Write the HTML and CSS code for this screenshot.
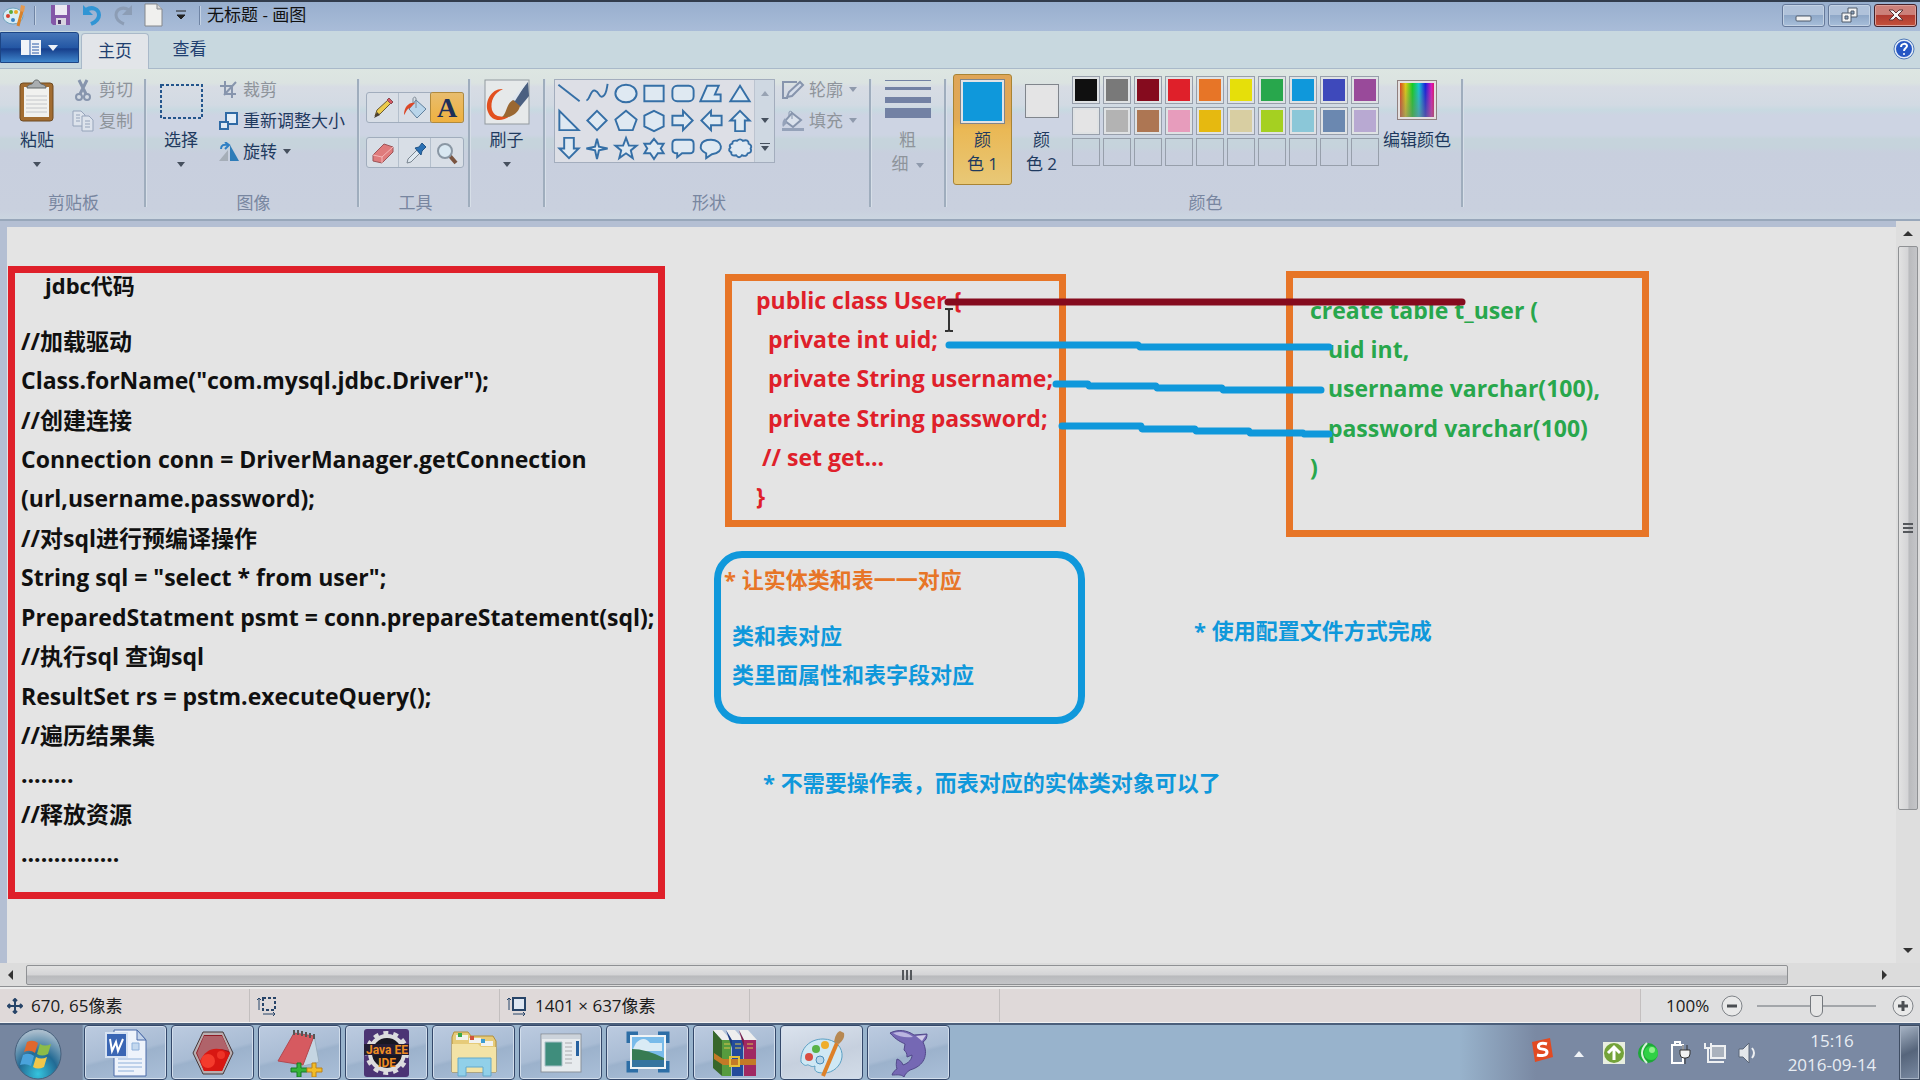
FILE: index.html
```html
<!DOCTYPE html>
<html lang="zh-CN">
<head>
<meta charset="utf-8">
<title>无标题 - 画图</title>
<link rel="stylesheet" href="styles.css">
</head>
<body>
<header class="titlebar">
  <svg class="app-icon" width="24" height="24" viewBox="0 0 24 24"><ellipse cx="11" cy="13" rx="10" ry="8" fill="#d9ecf4" stroke="#6fa3bd"/><circle cx="6" cy="13" r="2" fill="#d8412f"/><circle cx="9" cy="9" r="2" fill="#5cab3c"/><circle cx="14" cy="9" r="2" fill="#e9a927"/><circle cx="11" cy="17" r="2" fill="#3a83c4"/><path d="M20 8L16 23" stroke="#d9812a" stroke-width="3"/><path d="M18 8l1-6 4 1-1 6z" fill="#e59a51"/></svg>
  <span class="bar-sep"></span>
  <button class="quick" aria-label="保存"><svg width="22" height="22" viewBox="0 0 22 22"><path d="M1 1h19v20H3l-2-2z" fill="#8457a8"/><path d="M5 1h12v10H5z" fill="#ece9f3"/><path d="M6 14h10v7H6z" fill="#d8d4e0"/><path d="M8 16h3v4H8z" fill="#493163"/></svg></button>
  <button class="quick" aria-label="撤消"><svg width="22" height="22" viewBox="0 0 22 22"><path d="M5 6c6-4 13-1 13 5 0 4-3 7-8 9" fill="none" stroke="#3195d4" stroke-width="4"/><path d="M2 1v10h10z" fill="#3195d4"/></svg></button>
  <button class="quick" aria-label="重做"><svg width="22" height="22" viewBox="0 0 22 22"><path d="M17 6C11 2 4 5 4 11c0 4 3 7 8 9" fill="none" stroke="#8c9db5" stroke-width="3"/><path d="M20 1v10H10z" fill="#8c9db5"/></svg></button>
  <button class="quick" aria-label="新建"><svg width="22" height="24" viewBox="0 0 22 24"><path d="M2 1h12l5 5v17H2z" fill="#f0f0ee" stroke="#85888c"/><path d="M14 1v5h5" fill="#d4d4d4" stroke="#85888c"/></svg></button>
  <button class="quick quick-more" aria-label="自定义快速访问工具栏"><svg width="12" height="12" viewBox="0 0 12 12"><path d="M1 2h10M2 6h8l-4 4z" fill="#222" stroke="#222" stroke-width="1"/></svg></button>
  <span class="bar-sep"></span>
  <h1 class="title">无标题 - 画图</h1>
  <div class="window-buttons">
    <button class="win" aria-label="最小化"><svg width="20" height="18" viewBox="0 0 20 18"><rect x="2" y="10" width="15" height="5" rx="1" fill="#f2f2f2" stroke="#4e5a6b"/></svg></button>
    <button class="win" aria-label="还原"><svg width="20" height="18" viewBox="0 0 20 18"><path d="M8 2h9v9H8z" fill="#f2f2f2" stroke="#4e5a6b"/><path d="M11 5h3v3h-3z" fill="#8ba2be" stroke="#4e5a6b"/><path d="M2 7h9v9H2z" fill="#f2f2f2" stroke="#4e5a6b"/><path d="M5 10h3v3H5z" fill="#8ba2be" stroke="#4e5a6b"/></svg></button>
    <button class="win win-close" aria-label="关闭"><svg width="20" height="18" viewBox="0 0 20 18"><path d="M3 4h4l3 3 3-3h4l-5 5 5 5h-4l-3-3-3 3H3l5-5z" fill="#f4f4f4" stroke="#5c3435"/></svg></button>
  </div>
</header>

<nav class="tabs">
  <button class="file-button" aria-label="画图菜单"><svg width="40" height="20" viewBox="0 0 40 20"><rect x="1" y="2" width="20" height="15" fill="#f0f3f8"/><path d="M10 2v15" stroke="#2a5ba8"/><path d="M12 6h7M12 9h7M12 12h7M12 15h7" stroke="#2a5ba8" stroke-width="1"/><path d="M28 7h10l-5 6z" fill="#eef2f8"/></svg></button>
  <button class="tab tab-active">主页</button>
  <button class="tab">查看</button>
  <button class="help" aria-label="帮助"><svg width="22" height="22" viewBox="0 0 22 22"><circle cx="11" cy="11" r="9" fill="#2657c4" stroke="#e4ecf8" stroke-width="2"/><circle cx="11" cy="11" r="10" fill="none" stroke="#4e78b8"/><path d="M8 9c0-4 6-4 6-1 0 2-3 2-3 5" fill="none" stroke="#fff" stroke-width="2"/><circle cx="11" cy="16" r="1" fill="#fff"/></svg></button>
</nav>

<main class="ribbon">
  <section class="group group-clip">
    <div class="group-body">
      <button class="big big-paste"><span class="big-icon"><svg width="36" height="44" viewBox="0 0 36 44"><rect x="1" y="4" width="33" height="38" rx="3" fill="#a26c31" stroke="#6f4a22"/><path d="M5 8h25v30H5z" fill="#f1f1ef"/><path d="M7 17h21M7 21h21M7 25h21M7 29h21M7 33h21" stroke="#c4c6ca"/><path d="M8 9c0-4 5-3 6-5 1-4 6-4 7 0 1 2 6 1 6 5z" fill="#a9adb0" stroke="#5f6467"/></svg></span><span>粘贴</span><i class="caret"></i></button>
      <div class="stack">
        <button class="small" disabled><svg width="24" height="24" viewBox="0 0 24 24"><path d="M8 2l7 14M16 2L9 16" stroke="#8795ad" stroke-width="3"/><circle cx="8" cy="19" r="3" fill="none" stroke="#8795ad" stroke-width="2"/><circle cx="16" cy="19" r="3" fill="none" stroke="#8795ad" stroke-width="2"/></svg>剪切</button>
        <button class="small" disabled><svg width="24" height="24" viewBox="0 0 24 24"><path d="M2 2h8l4 4v11H2z" fill="#dde3ec" stroke="#95a3ba"/><path d="M11 7h7l4 4v11H11z" fill="#dde3ec" stroke="#95a3ba"/><path d="M5 6h4M5 9h4M5 12h4M14 12h5M14 15h5M14 18h5" stroke="#95a3ba"/></svg>复制</button>
      </div>
    </div>
    <h2 class="group-label">剪贴板</h2>
  </section>

  <section class="group group-image">
    <div class="group-body">
      <button class="big big-select"><span class="big-icon"><svg width="44" height="44" viewBox="0 0 44 44"><rect x="2" y="6" width="41" height="33" fill="none" stroke="#23558c" stroke-width="2" stroke-dasharray="3 2"/></svg></span><span>选择</span><i class="caret"></i></button>
      <div class="stack">
        <button class="small" disabled><svg width="20" height="20" viewBox="0 0 20 20"><path d="M6 1v13h11M1 6h12v12M5 15L17 2" fill="none" stroke="#8795ad" stroke-width="2"/></svg>裁剪</button>
        <button class="small"><svg width="20" height="20" viewBox="0 0 20 20"><path d="M7 2h11v11H7z" fill="#e4eef8" stroke="#2f6aa5" stroke-width="2"/><path d="M1 11h8v7H1z" fill="#dfe9f4" stroke="#2f6aa5" stroke-width="2"/></svg>重新调整大小</button>
        <button class="small"><svg width="20" height="20" viewBox="0 0 20 20"><path d="M9 8v11H0z" fill="#a6aeb8"/><path d="M11 3v16h9z" fill="#2e7cb8"/><path d="M2 7c0-4 3-5 7-4M6 0l4 3-4 4" fill="none" stroke="#2f7fc4" stroke-width="2"/></svg>旋转<i class="caret"></i></button>
      </div>
    </div>
    <h2 class="group-label">图像</h2>
  </section>

  <section class="group group-tools">
    <div class="group-body tool-rows">
      <div class="tool-row">
        <button class="tool" aria-label="铅笔"><svg width="26" height="26" viewBox="0 0 26 26"><path d="M5 21l2-6L18 5l3 3L10 19z" fill="#eccb4c" stroke="#6a5933"/><path d="M17 5l2-2 4 4-2 2z" fill="#d65b66" stroke="#8b4950"/><path d="M4 23l3-6 3 3z" fill="#4a3f33"/></svg></button>
        <button class="tool" aria-label="用颜色填充"><svg width="26" height="26" viewBox="0 0 26 26"><path d="M14 5l10 9-9 9-8-9z" fill="#b9d5ea" stroke="#5f7f9c"/><path d="M14 13V4c0-3-3-2-3 0v5" fill="none" stroke="#7d8a96"/><path d="M13 8C7 7 2 12 2 20c2-2 2-6 6-7z" fill="#db4727"/></svg></button>
        <button class="tool tool-active" aria-label="文本">A</button>
      </div>
      <div class="tool-row">
        <button class="tool" aria-label="橡皮擦"><svg width="26" height="26" viewBox="0 0 26 26"><path d="M3 15L14 4l9 3v5L12 23l-9-2z" fill="#df7b7c" stroke="#9b5558"/><path d="M3 15l9 2 11-10M12 17v6" fill="none" stroke="#f3b8b8"/></svg></button>
        <button class="tool" aria-label="颜色选取器"><svg width="26" height="26" viewBox="0 0 26 26"><path d="M5 23l1-4 9-9 3 3-9 9z" fill="#dfe8f0" stroke="#7a8590"/><path d="M13 8l4-1 3-4 4 4-4 4-1 4z" fill="#2a70b4" stroke="#245586"/></svg></button>
        <button class="tool" aria-label="放大镜"><svg width="26" height="26" viewBox="0 0 26 26"><path d="M16 16l6 7" stroke="#7a5440" stroke-width="4"/><circle cx="11" cy="11" r="7" fill="#d9e8f2" stroke="#8a97a4" stroke-width="2"/></svg></button>
      </div>
    </div>
    <h2 class="group-label">工具</h2>
  </section>

  <section class="group group-brush">
    <div class="group-body">
      <button class="big"><span class="big-icon"><svg width="46" height="46" viewBox="0 0 46 46"><rect x="1" y="1" width="44" height="44" fill="#e6e9ea" stroke="#92999f"/><path d="M19 10C8 9 0 22 4 33c4 10 14 10 22 4-8 1-15 2-18-6-2-9 2-17 11-21z" fill="#e2501f"/><path d="M44 3L29 22l7 6 9-11z" fill="#4a5f80"/><path d="M43 3L28 20l3 2z" fill="#dfe6ee"/><path d="M29 21l7 6c-2 8-9 12-18 11 5-4 4-13 11-17z" fill="#9a6832"/></svg></span><span>刷子</span><i class="caret"></i></button>
    </div>
  </section>

  <section class="group group-shapes">
    <div class="group-body">
      <div class="shape-box">
        <div class="shape-grid">
          <svg viewBox="0 0 28 28"><path d="M3 5l22 17"/></svg>
          <svg viewBox="0 0 28 28"><path d="M3 21c4 0 4-12 9-10s4 8 8 6 4-8 5-13"/></svg>
          <svg viewBox="0 0 28 28"><ellipse cx="14" cy="14" rx="11" ry="9"/></svg>
          <svg viewBox="0 0 28 28"><path d="M4 6h20v16H4z"/></svg>
          <svg viewBox="0 0 28 28"><rect x="3" y="6" width="22" height="16" rx="5"/></svg>
          <svg viewBox="0 0 28 28"><path d="M3 22L10 6h12l-4 9h6v7z"/></svg>
          <svg viewBox="0 0 28 28"><path d="M14 6l10 16H4z"/></svg>
          <svg viewBox="0 0 28 28"><path d="M4 4v20h20z"/></svg>
          <svg viewBox="0 0 28 28"><path d="M14 4l10 10-10 10L4 14z"/></svg>
          <svg viewBox="0 0 28 28"><path d="M14 4l11 9-4 11H7L3 13z"/></svg>
          <svg viewBox="0 0 28 28"><path d="M14 4l10 5v11l-10 5-10-5V9z"/></svg>
          <svg viewBox="0 0 28 28"><path d="M3 9h11V4l10 10-10 10v-5H3z"/></svg>
          <svg viewBox="0 0 28 28"><path d="M25 9H14V4L4 14l10 10v-5h11z"/></svg>
          <svg viewBox="0 0 28 28"><path d="M9 25V14H4L14 4l10 10h-5v11z"/></svg>
          <svg viewBox="0 0 28 28"><path d="M9 3v11H4l10 10 10-10h-5V3z"/></svg>
          <svg viewBox="0 0 28 28"><path d="M14 4l2 8 9 2-9 2-2 9-2-9-9-2 9-2z"/></svg>
          <svg viewBox="0 0 28 28"><path d="M14 3l3 8h8l-6 5 2 8-7-5-7 5 2-8-6-5h8z"/></svg>
          <svg viewBox="0 0 28 28"><path d="M14 4l4 5h6l-3 5 3 5h-6l-4 6-4-6H4l3-5-3-5h6z"/></svg>
          <svg viewBox="0 0 28 28"><path d="M7 5h14q4 0 4 4v6q0 4-4 4h-8l-5 4v-4q-5 0-5-4V9q0-4 4-4z"/></svg>
          <svg viewBox="0 0 28 28"><path d="M9 19C0 15 2 5 14 5s15 13 1 15l-6 4z"/></svg>
          <svg viewBox="0 0 28 28"><path d="M6 9q0-4 5-3 3-3 6 0 6-2 6 3 4 2 2 5 2 4-3 5-1 4-6 2-3 4-6 0-6 1-5-3-4-2-1-5-2-3 2-4z"/></svg>
        </div>
        <div class="shape-scroll"><i class="caret caret-up"></i><i class="caret"></i><i class="caret caret-bar"></i></div>
      </div>
      <div class="stack">
        <button class="small" disabled><svg width="24" height="22" viewBox="0 0 24 22"><path d="M16 3H2v16h5" fill="none" stroke="#8795ad" stroke-width="2"/><path d="M6 18l2-5L19 3l3 3-11 11z" fill="#d6deea" stroke="#8795ad" stroke-width="2"/></svg>轮廓<i class="caret"></i></button>
        <button class="small" disabled><svg width="24" height="22" viewBox="0 0 24 22"><path d="M11 3l9 7-8 7-8-6z" fill="#dbe2ec" stroke="#8795ad" stroke-width="2"/><path d="M11 9V2q-3-2-3 1v3" fill="none" stroke="#8795ad"/><path d="M4 8q-4 4-2 9l4-4zM1 18h22v3H1z" fill="#95a2b9"/></svg>填充<i class="caret"></i></button>
      </div>
    </div>
    <h2 class="group-label">形状</h2>
  </section>

  <section class="group group-size">
    <div class="group-body">
      <button class="big" disabled><span class="big-icon"><svg width="46" height="44" viewBox="0 0 46 44"><path d="M0 1h46v1H0zM0 8h46v3H0zM0 18h46v6H0zM0 29h46v10H0z" fill="#7281a4"/></svg></span><span>粗</span><span>细<i class="caret"></i></span></button>
    </div>
  </section>

  <section class="group group-colors">
    <div class="group-body">
      <button class="big color-pick color-pick-active"><span class="big-icon"><span class="current current-1"></span></span><span>颜</span><span>色 1</span></button>
      <button class="big color-pick"><span class="big-icon"><span class="current current-2"></span></span><span>颜</span><span>色 2</span></button>
      <div class="palette">
        <button class="swatch c-black" aria-label="黑色"></button><button class="swatch c-gray" aria-label="灰色"></button><button class="swatch c-maroon" aria-label="深红色"></button><button class="swatch c-red" aria-label="红色"></button><button class="swatch c-orange" aria-label="橙色"></button><button class="swatch c-yellow" aria-label="黄色"></button><button class="swatch c-green" aria-label="绿色"></button><button class="swatch c-blue" aria-label="青绿"></button><button class="swatch c-indigo" aria-label="靛蓝"></button><button class="swatch c-purple" aria-label="紫色"></button>
        <button class="swatch c-white" aria-label="白色"></button><button class="swatch c-silver" aria-label="浅灰色"></button><button class="swatch c-brown" aria-label="褐色"></button><button class="swatch c-pink" aria-label="玫瑰色"></button><button class="swatch c-gold" aria-label="金色"></button><button class="swatch c-tan" aria-label="浅黄色"></button><button class="swatch c-lime" aria-label="酸橙色"></button><button class="swatch c-sky" aria-label="淡青绿色"></button><button class="swatch c-slate" aria-label="蓝灰色"></button><button class="swatch c-lilac" aria-label="淡紫色"></button>
        <button class="swatch" aria-label="自定义 1"></button><button class="swatch" aria-label="自定义 2"></button><button class="swatch" aria-label="自定义 3"></button><button class="swatch" aria-label="自定义 4"></button><button class="swatch" aria-label="自定义 5"></button><button class="swatch" aria-label="自定义 6"></button><button class="swatch" aria-label="自定义 7"></button><button class="swatch" aria-label="自定义 8"></button><button class="swatch" aria-label="自定义 9"></button><button class="swatch" aria-label="自定义 10"></button>
      </div>
      <button class="big edit-colors"><span class="big-icon"><span class="spectrum"></span></span><span>编辑颜色</span></button>
    </div>
    <h2 class="group-label">颜色</h2>
  </section>
</main>

<div class="workspace">
  <div class="canvas">
    <div class="box box-code"></div>
    <div class="box box-user"></div>
    <div class="box box-table"></div>
    <div class="box box-note"></div>

    <p class="note note-title">jdbc代码</p>
    <div class="lines lines-code">
      <span>//加载驱动</span><span>Class.forName("com.mysql.jdbc.Driver");</span><span>//创建连接</span><span>Connection conn = DriverManager.getConnection</span><span>(url,username.password);</span><span>//对sql进行预编译操作</span><span>String sql = "select * from user";</span><span>PreparedStatment psmt = conn.prepareStatement(sql);</span><span>//执行sql 查询sql</span><span>ResultSet rs = pstm.executeQuery();</span><span>//遍历结果集</span><span>........</span><span>//释放资源</span><span>...............</span>
    </div>
    <div class="lines lines-user">
      <span>public class User {</span><span>  private int uid;</span><span>  private String username;</span><span>  private String password;</span><span> // set get...</span><span>}</span>
    </div>
    <div class="lines lines-table">
      <span>create table t_user (</span><span>   uid int,</span><span>   username varchar(100),</span><span>   password varchar(100)</span><span>)</span>
    </div>
    <p class="note note-orange">* 让实体类和表一一对应</p>
    <div class="lines lines-map"><span>类和表对应</span><span>类里面属性和表字段对应</span></div>
    <p class="note note-config">* 使用配置文件方式完成</p>
    <p class="note note-object">* 不需要操作表，而表对应的实体类对象可以了</p>

    <svg class="strokes" width="1500" height="240">
      <g fill="none" stroke-width="7" stroke-linecap="round">
        <path d="M941 75H1455" stroke="#850b1e"/>
        <g stroke="#0f98db" stroke-linejoin="round">
          <path d="M942 118H1131L1133 120H1322"/>
          <path d="M1049 157H1081L1082 159H1149L1150 161H1215L1216 163H1314"/>
          <path d="M1055 199H1134L1135 202H1188L1189 204H1242L1243 206H1296L1297 207H1322"/>
        </g>
      </g>
      <path d="M938 82h3l1 1 1-1h3M942 82v22M938 104h3l1-1 1 1h3" fill="none" stroke="#333" stroke-width="2"/>
    </svg>
  </div>
  <div class="vscroll"><i class="arrow arrow-up"></i><div class="vthumb"><i class="grip"></i></div><i class="arrow arrow-down"></i></div>
</div>
<div class="hscroll"><i class="arrow arrow-left"></i><div class="hthumb"><i class="grip"></i></div><i class="arrow arrow-right"></i></div>

<footer class="status">
  <div class="cell"><svg width="16" height="16" viewBox="0 0 16 16"><path d="M8 1v14M1 8h14M6 3l2-2 2 2M6 13l2 2 2-2M3 6L1 8l2 2M13 6l2 2-2 2" fill="none" stroke="#274468" stroke-width="2"/></svg>670, 65像素</div>
  <div class="cell"><svg width="20" height="20" viewBox="0 0 20 20"><path d="M6 2h12v12H6z" fill="none" stroke="#274468" stroke-width="2" stroke-dasharray="3 2"/><path d="M2 14V2M0 4l2-2 2 2M6 18h12M16 16l2 2-2 2" fill="none" stroke="#274468"/></svg></div>
  <div class="cell"><svg width="20" height="20" viewBox="0 0 20 20"><path d="M6 2h12v12H6z" fill="#dfe7f2" stroke="#274468" stroke-width="2"/><path d="M2 14V2M0 4l2-2 2 2M6 18h12M16 16l2 2-2 2" fill="none" stroke="#274468"/></svg>1401 × 637像素</div>
  <div class="cell"></div>
  <div class="cell cell-wide"></div>
  <div class="zoom">
    <label class="zoom-label" for="zoom">100%</label>
    <button class="round" aria-label="缩小"><svg width="24" height="24" viewBox="0 0 24 24"><circle cx="12" cy="12" r="10" fill="#e9e9e9" stroke="#7f8388"/><path d="M7 12h10" stroke="#4b4e52" stroke-width="3"/></svg></button>
    <input class="slider" id="zoom" type="range" min="0" max="100" value="50">
    <button class="round" aria-label="放大"><svg width="24" height="24" viewBox="0 0 24 24"><circle cx="12" cy="12" r="10" fill="#e9e9e9" stroke="#7f8388"/><path d="M7 12h10M12 7v10" stroke="#4b4e52" stroke-width="3"/></svg></button>
  </div>
</footer>

<div class="taskbar">
  <button class="start" aria-label="开始"><svg width="50" height="54" viewBox="0 0 50 54"><defs><radialGradient id="orb" cx="50%" cy="90%" r="85%"><stop offset="0" stop-color="#35c4de"/><stop offset=".5" stop-color="#226a94"/><stop offset="1" stop-color="#a8bccc"/></radialGradient></defs><ellipse cx="25" cy="28" rx="23" ry="25" fill="url(#orb)" stroke="#46607c"/><path d="M14 16q6-3 11 1l-3 10q-5-4-11-1z" fill="#e0672d"/><path d="M27 18q5 3 11 0l-3 10q-6 3-11 0z" fill="#8cbc48"/><path d="M10 29q6-3 11 1l-3 10q-5-3-11-1z" fill="#4aa3dc"/><path d="M23 31q5 3 11 0l-3 10q-6 3-11 0z" fill="#f2c74a"/></svg></button>
  <div class="apps">
    <button class="app" aria-label="Word"><svg width="48" height="48" viewBox="0 0 48 48"><path d="M12 1h23l9 10v36H12z" fill="#eef3fb" stroke="#4a6aa8"/><path d="M35 1v10h9z" fill="#c4d4ea" stroke="#4a6aa8"/><path d="M16 30h24M16 34h24M16 38h24M16 42h16M30 14h7v7h-7z" stroke="#8eb0da" fill="#c4d8ee"/><path d="M4 4h21v24H4z" fill="#3a66b4" stroke="#d6e2f2" stroke-width="2"/><path d="M8 10l2 12 4-9 2 9 5-12" fill="none" stroke="#fff" stroke-width="2"/></svg></button>
    <button class="app" aria-label="录制"><svg width="48" height="48" viewBox="0 0 48 48"><path d="M14 3h20l10 21-10 21H14L4 24z" fill="#b9aeb0" stroke="#443638"/><path d="M15 6h18l8 18-8 18H15L7 24z" fill="#8f1b24"/><path d="M15 7h18l7 15c-12-4-20-1-28 12l-4-10z" fill="#b0636a"/><path d="M11 32c7-14 17-15 30-8l-8 18H15z" fill="#d81712"/><circle cx="19" cy="32" r="7" fill="#f43b2c"/><circle cx="32" cy="26" r="4" fill="#ee3327"/></svg></button>
    <button class="app" aria-label="记事本"><svg width="48" height="48" viewBox="0 0 48 48"><path d="M38 6l5 27-20 5z" fill="#c5d5e2" stroke="#9aaebf"/><path d="M18 4l20 3-11 29-25-4z" fill="#d65a60" stroke="#b34850"/><path d="M18 1v5m4-5v5m4-4v5m4-4v5m4-4v5m4-4v5" stroke="#555" stroke-width="2"/><path d="M21 34h4v5h6v4h-6v5h-4v-5h-6v-4h6z" fill="#34b338" stroke="#167825"/><path d="M36 34h4v5h6v4h-6v5h-4v-5h-5v-4h5z" fill="#f2bd27" stroke="#bd821b"/></svg></button>
    <button class="app" aria-label="Java EE IDE"><svg width="48" height="48" viewBox="0 0 48 48"><rect x="1" y="0" width="45" height="48" rx="3" fill="#4b3474"/><circle cx="24" cy="24" r="17" fill="#191722" stroke="#dcdcde" stroke-width="4"/><circle cx="24" cy="24" r="20" fill="none" stroke="#dcdcde" stroke-width="4" stroke-dasharray="5 5"/><path d="M1 15h45v11H1z" fill="#241d34"/><text x="24" y="25" class="ide">Java EE</text><text x="24" y="38" class="ide">IDE</text></svg></button>
    <button class="app" aria-label="资源管理器"><svg width="48" height="48" viewBox="0 0 48 48"><path d="M2 8l2-5h14l3 4h22l3 5v31H2z" fill="#e6cb79" stroke="#b28f3b"/><path d="M6 6h12v5H6zM19 9h12v5H19zM31 12h12v5H31z" fill="#f2f2ee"/><path d="M8 4h4v4H8z" fill="#39a84a"/><path d="M20 7h4v4h-4z" fill="#d3533b"/><path d="M31 10h4v4h-4z" fill="#3b9cd3"/><path d="M2 15h26l3 3h15v25H2z" fill="#f3e3a6"/><path d="M8 47V29h33v18h-8v-9H16v9z" fill="#91d0e9" stroke="#63a9cb"/></svg></button>
    <button class="app" aria-label="程序"><svg width="48" height="48" viewBox="0 0 48 48"><rect x="4" y="5" width="40" height="38" fill="#e7ebee" stroke="#8a929b"/><path d="M5 6h38v4H5z" fill="#ccd3db"/><path d="M8 13h17v24H8z" fill="#3f8d7c" stroke="#a8c0c8"/><path d="M28 14h7M28 18h7M28 22h7M28 26h7M28 30h7M28 34h7" stroke="#a8aaae"/><path d="M39 12h3v15h-3z" fill="#2862a0"/></svg></button>
    <button class="app" aria-label="图片查看器"><svg width="48" height="48" viewBox="0 0 48 48"><path d="M5 14V5h9M34 5h9v9M43 32v9h-9M14 41H5v-9" fill="none" stroke="#2d6ea6" stroke-width="5"/><path d="M7 7h34v32H7z" fill="#78bbea" stroke="#f0f4f6" stroke-width="2"/><path d="M12 14q8-8 14 0h12v8H8z" fill="#d9ebf5"/><path d="M8 20q14 0 32 9v2H8z" fill="#377b52"/><path d="M8 31h32v7H8z" fill="#35749f"/></svg></button>
    <button class="app" aria-label="压缩文件"><svg width="48" height="48" viewBox="0 0 48 48"><path d="M2 1l9 10v36L2 39z" fill="#37672b"/><path d="M2 1h9l9 10h-9z" fill="#eee"/><path d="M11 11h9v36h-9z" fill="#569b3e"/><path d="M15 1h9l9 10H20z" fill="#eee"/><path d="M15 1l6 10v8z" fill="#1c3a80"/><path d="M21 11h11v36H21z" fill="#234b9b"/><path d="M28 1h9l9 10H33z" fill="#eee"/><path d="M28 1l5 10v8z" fill="#7a1c4a"/><path d="M33 11h12v36H33z" fill="#a02862"/><path d="M3 24l9 6h33v6H12L3 30z" fill="#c37a27"/><path d="M19 28h9v9h-9z" fill="none" stroke="#e3c03a" stroke-width="2"/><path d="M13 15h6M24 15h6M36 15h6M13 19h6M24 19h6M36 19h6" stroke="#d9c54a"/></svg></button>
    <button class="app app-active" aria-label="画图"><svg width="48" height="48" viewBox="0 0 48 48"><path d="M3 33C2 19 12 10 25 10s20 9 19 18-9 16-18 16c-8 0-10-2-9-7-4 2-6-2-8-1s-3 0-6-3z" fill="#cfe8f4" stroke="#5aa0c4"/><circle cx="11" cy="28" r="4" fill="#d94d42"/><circle cx="18" cy="20" r="4" fill="#59b347"/><circle cx="27" cy="16" r="4" fill="#efae2c"/><circle cx="22" cy="31" r="4" fill="#b9d6e8" stroke="#4b8ebb"/><path d="M39 14L25 47" stroke="#dd8129" stroke-width="4"/><path d="M36 13c1-5 2-9 6-11l4 2c1 5-2 8-5 11z" fill="#b78852"/></svg></button>
    <button class="app" aria-label="数据库工具"><svg width="48" height="48" viewBox="0 0 48 48"><path d="M5 4c8-4 17-3 24 2l13-1c0 4-1 6-4 8 6 13 1 24-13 28-3 2-5 4-6 7-3-3-7-2-12-2 1-3 3-5 5-6-1-3-1-6 0-10 3 1 5 3 6 6 6-2 9-6 9-10l-5 2c0-4-1-5-3-7l1-6c-4-2-9-4-15-11z" fill="#7568b4" stroke="#514889"/><path d="M8 4c7-2 14-1 20 4-7 1-14 0-20-4z" fill="#bbb5e0"/><path d="M31 7l10-1-4 6z" fill="#cfcbe8"/></svg></button>
  </div>
  <div class="tray">
    <svg width="24" height="26" viewBox="0 0 24 26"><path d="M2 5l18-4 3 19-18 5z" fill="#e24a21"/><path d="M17 7c-7-2-10 1-8 4 2 2 8 0 8 4 0 4-6 4-10 3" fill="none" stroke="#fff" stroke-width="3"/></svg>
    <svg width="12" height="20" viewBox="0 0 12 20"><path d="M1 14h10L6 8z" fill="#f0f3f7"/></svg>
    <svg width="24" height="24" viewBox="0 0 24 24"><path d="M1 1h22v22H1z" fill="#e9efe0"/><circle cx="12" cy="12" r="10" fill="#74a33a"/><path d="M12 19V7M6 12l6-6 6 6" fill="none" stroke="#fff" stroke-width="3"/></svg>
    <svg width="22" height="24" viewBox="0 0 22 24"><circle cx="11" cy="12" r="10" fill="#1da837"/><circle cx="14" cy="12" r="7" fill="#2fd145"/><circle cx="15" cy="9" r="3" fill="#8ff08c"/><path d="M10 2Q0 12 10 22" fill="none" stroke="#d6f2da" stroke-width="2"/></svg>
    <svg width="22" height="24" viewBox="0 0 22 24"><path d="M2 4h11v18H2zM5 1h5v3H5z" fill="#7c8aa0" stroke="#fff" stroke-width="2"/><path d="M10 9h10v4q0 4-4 4h-2q-4 0-4-4zM13 4v5M17 4v5M15 17v6" fill="#f2f2f2" stroke="#333" stroke-width="1"/></svg>
    <svg width="24" height="24" viewBox="0 0 24 24"><path d="M8 5h14v12H8z" fill="#aab2bd" stroke="#eef0f2" stroke-width="2"/><path d="M9 21h12" stroke="#eef0f2" stroke-width="2"/><path d="M2 2v5h6V2M5 7v14h4" fill="none" stroke="#eef0f2" stroke-width="2"/></svg>
    <svg width="20" height="22" viewBox="0 0 20 22"><path d="M1 7h4l6-6v20l-6-6H1z" fill="#e4e7ea" stroke="#5a6678"/><path d="M14 6q4 5 0 10" fill="none" stroke="#eef0f2" stroke-width="2"/></svg>
    <time class="clock"><span>15:16</span><span>2016-09-14</span></time>
  </div>
  <button class="show-desktop" aria-label="显示桌面"></button>
</div>
</body>
</html>
```
FILE: styles.css
```css
* { box-sizing: border-box; }

body {
  margin: 0;
  height: 100vh;
  display: flex;
  flex-direction: column;
  overflow: hidden;
  background: #b4bfd3;
  color: #1f3a5f;
  font: 17px/24px "Open Sans", "Noto Sans CJK SC", sans-serif;
}

button {
  margin: 0;
  padding: 0;
  border: 0;
  background: none;
  color: inherit;
  font: inherit;
}

h1, h2, p { margin: 0; font-size: 17px; font-weight: 400; }
svg { display: block; flex: none; }

/* Title bar */
.titlebar {
  flex: none;
  height: 31px;
  padding: 0 0 3px 2px;
  display: flex;
  align-items: center;
  border-top: 2px solid #313c4c;
  background: linear-gradient(#98afce, #a9bcd8);
}
.app-icon { margin-right: 8px; }
.bar-sep { width: 2px; height: 19px; background: #6f84a4; border-right: 1px solid #c4d2e4; }
.quick { width: 31px; display: flex; justify-content: center; }
.bar-sep + .quick { margin-left: 9px; }
.quick-more { width: 23px; margin-right: 7px; }
.title { margin-left: 6px; color: #111; }
.window-buttons { margin-left: auto; display: flex; gap: 3px; padding-right: 3px; }
.win {
  width: 43px;
  height: 23px;
  display: grid;
  place-items: center;
  border: 1px solid #65799a;
  border-radius: 3px;
  box-shadow: inset 0 0 0 1px #c3d2e4;
  background: linear-gradient(#b0c2da 50%, #8fa8c8 50%, #a8bfda);
}
.win-close { border-color: #45222a; box-shadow: inset 0 0 0 1px #dba09a; background: linear-gradient(#cc8079 45%, #b03a30 50%, #c4523c); }

/* Tabs */
.tabs {
  flex: none;
  height: 38px;
  display: flex;
  align-items: flex-end;
  background: #c8d8df;
  border-bottom: 1px solid #a9b9c9;
}
.file-button {
  width: 79px;
  height: 31px;
  margin-bottom: 5px;
  display: grid;
  place-items: center;
  border: 1px solid #1d4585;
  border-radius: 0 3px 0 0;
  background: linear-gradient(#4676b8, #2457a4 50%, #173f8c 55%, #3f86cc);
}
.tab { width: 81px; height: 36px; padding-bottom: 2px; color: #1f3f70; }
.tab-active {
  width: 68px;
  margin: 0 0 -1px 2px;
  border: 1px solid #a9b9c9;
  border-bottom: 0;
  border-radius: 4px 4px 0 0;
  background: #e2e5e9;
}
.help { margin: 0 5px 8px auto; }

/* Ribbon */
.ribbon {
  flex: none;
  height: 152px;
  display: flex;
  border-bottom: 2px solid #98a7ba;
  background: linear-gradient(#dde6e2 0, #dbe3e1 14px, #d7dce4 18px, #d2dae3 36px, #c8d9e1 41px, #cdd4e3 46px, #cdd4e3 66px, #c6d4dc 70px, #c6d3dc 78px, #c8cfde 84px, #c9d0de 140px, #cbd5e0 149px);
}
.group {
  flex: none;
  display: flex;
  flex-direction: column;
  position: relative;
}
.group::after {
  content: "";
  position: absolute;
  top: 10px;
  right: 0;
  width: 2px;
  height: 128px;
  background: #9fadbd;
  border-right: 1px solid #d7dfe8;
}
.group-body { height: 122px; display: flex; align-items: flex-start; }
.group-label { text-align: center; color: #7886a0; }
.group-clip { width: 147px; }
.group-image { width: 213px; }
.group-tools { width: 111px; }
.group-brush { width: 75px; }
.group-shapes { width: 326px; }
.group-size { width: 75px; }
.group-colors { width: 517px; }

.big {
  margin-top: 5px;
  padding-top: 5px;
  display: flex;
  flex-direction: column;
  align-items: center;
}
.big-icon { height: 49px; }
.big > .caret { margin-top: 10px; }
.big-paste { width: 56px; margin-left: 9px; }
.big-select { width: 56px; margin-left: 6px; }
.group-brush .big { width: 71px; }
.group-size .big { width: 71px; }
button:disabled { color: #8e949b; }

.caret {
  display: inline-block;
  border: 4px solid transparent;
  border-top: 5px solid #46505e;
  border-bottom: 0;
}
button:disabled .caret { border-top-color: #8f9aac; }
span > .caret { margin-left: 7px; vertical-align: middle; }
.small > .caret { margin-left: 2px; }

.stack { padding-top: 5px; }
.small { height: 31px; display: flex; align-items: center; gap: 4px; }
.group-clip .stack { margin-left: 6px; }
.group-image .stack { margin-left: 10px; }
.group-shapes .stack { margin-left: 6px; }

.tool-rows { flex-direction: column; gap: 14px; padding: 23px 0 0 6px; }
.tool-row {
  display: flex;
  border: 1px solid #a1adbd;
  border-radius: 3px;
  background: #d8dee6;
}
.tool { width: 32px; height: 29px; display: grid; place-items: center; border-right: 1px solid #b4bfcc; }
.tool:last-child { border-right: 0; }
.tool-active {
  border-radius: 2px;
  box-shadow: 0 0 0 1px #b18a3c;
  background: linear-gradient(#e8bd6e, #efb13f);
  color: #1d2f59;
  font: bold 28px/28px "Liberation Serif", serif;
}

.shape-box {
  width: 221px;
  height: 84px;
  margin: 10px 0 0 8px;
  display: flex;
  border: 1px solid #a3adbd;
  background: #dddfe6;
}
.shape-grid { flex: 1; display: grid; grid-template-columns: repeat(7, 1fr); }
.shape-grid svg { width: 28px; height: 27px; fill: #dfe9f2; stroke: #356fa6; stroke-width: 2; }
.shape-grid svg:nth-child(-n+2) { fill: none; }
.shape-scroll {
  width: 20px;
  display: flex;
  flex-direction: column;
  align-items: center;
  justify-content: space-around;
  border-left: 1px solid #bcc4d0;
  background: #cfd8e2;
}
.caret-up { transform: rotate(180deg); border-top-color: #98a3b3; }
.caret-bar { position: relative; }
.caret-bar::before { content: ""; position: absolute; left: -5px; top: -8px; width: 10px; height: 1px; background: #46505e; }

.color-pick { width: 59px; height: 111px; margin-left: 6px; border: 1px solid transparent; border-radius: 3px; padding-top: 4px; }
.color-pick + .color-pick { width: 45px; margin-left: 7px; }
.color-pick-active { border-color: #a98434; background: linear-gradient(#dfa558, #e0aa56 40%, #eab855 50%, #e8c877); }
.current { display: block; border: 1px solid #80858c; box-shadow: inset 0 0 0 2px #e2e3e5; }
.current-1 { width: 45px; height: 45px; background: #0f98db; }
.current-2 { width: 34px; height: 34px; margin-top: 5px; background: #e4e4e5; }
.palette { margin: 7px 0 0 8px; display: grid; grid-template-columns: repeat(10, 28px); gap: 3px; }
.swatch { height: 28px; border: 1px solid #979fab; }
.swatch[class*="c-"] { box-shadow: inset 0 0 0 2px #dfe2e4; }
.c-black { background: #101010; }
.c-gray { background: #797979; }
.c-maroon { background: #850b1e; }
.c-red { background: #df202a; }
.c-orange { background: #e77527; }
.c-yellow { background: #e6df0a; }
.c-green { background: #28a74c; }
.c-blue { background: #0f98db; }
.c-indigo { background: #3e49bb; }
.c-purple { background: #994a9a; }
.c-white { background: #e4e4e5; }
.c-silver { background: #b3b3b3; }
.c-brown { background: #ad7653; }
.c-pink { background: #e79cbc; }
.c-gold { background: #e6b910; }
.c-tan { background: #d8cea2; }
.c-lime { background: #a5d021; }
.c-sky { background: #8bc7d8; }
.c-slate { background: #6b88b0; }
.c-lilac { background: #b8a9d2; }
.edit-colors { margin-left: 4px; }
.spectrum {
  display: block;
  width: 40px;
  height: 40px;
  margin-top: 1px;
  border: 1px solid #8f8080;
  box-shadow: inset 0 0 0 2px #e4e0e0;
  background: linear-gradient(transparent, #80808099), linear-gradient(90deg, #e01020, #e0d010 20%, #10d020 38%, #10c8d8 55%, #1018e0 72%, #e010c0 88%, #e01020);
}

/* Drawing area */
.workspace { flex: 1; min-height: 0; display: flex; }
.canvas {
  flex: 1;
  min-width: 0;
  margin: 6px 0 0 7px;
  position: relative;
  overflow: hidden;
  background: #e4e4e4;
  color: #101010;
  font-size: 23px;
  font-weight: 700;
}
.box { position: absolute; border: 7px solid #df202a; }
.box-code { left: 1px; top: 39px; width: 657px; height: 633px; }
.box-user { left: 718px; top: 47px; width: 341px; height: 253px; border-color: #e77527; }
.box-table { left: 1279px; top: 44px; width: 363px; height: 266px; border-color: #e77527; }
.box-note { left: 707px; top: 324px; width: 371px; height: 173px; border-color: #0f98db; border-radius: 28px; }
.lines { position: absolute; display: grid; grid-auto-rows: 1fr; align-items: center; white-space: pre; }
.lines-code { left: 14px; top: 94px; height: 552px; }
.lines-user { left: 749px; top: 53px; height: 236px; color: #df202a; }
.lines-table { left: 1303px; top: 63px; height: 197px; color: #28a74c; }
.lines-map { left: 725px; top: 388px; height: 79px; font-size: 22px; color: #0f98db; }
.note { position: absolute; font-size: 22px; font-weight: 700; line-height: 40px; white-space: nowrap; color: #0f98db; }
.note-title { left: 38px; top: 38px; color: #101010; }
.note-orange { left: 717px; top: 332px; color: #e77527; }
.note-config { left: 1187px; top: 383px; }
.note-object { left: 756px; top: 535px; }
.strokes { position: absolute; left: 0; top: 0; }

/* Scroll bars */
.vscroll {
  flex: none;
  width: 24px;
  padding: 7px 2px;
  display: flex;
  flex-direction: column;
  align-items: center;
  background: #dedede;
}
.vthumb {
  width: 20px;
  height: 564px;
  margin-top: 10px;
  display: grid;
  place-items: center;
  border: 1px solid #8f9194;
  border-radius: 2px;
  background: linear-gradient(90deg, #e2e2e2, #d4d4d6 50%, #b9babd 55%, #c4c5c8);
}
.hscroll {
  flex: none;
  height: 24px;
  padding: 0 33px 0 8px;
  display: flex;
  align-items: center;
  background: #dcdcdc;
  border-bottom: 1px solid #8f9194;
}
.hthumb {
  flex: 1;
  height: 20px;
  margin: 0 94px 0 13px;
  display: grid;
  place-items: center;
  border: 1px solid #8f9194;
  border-radius: 2px;
  background: linear-gradient(#e2e2e2, #d4d4d6 50%, #b9babd 55%, #c4c5c8);
}
.grip { width: 10px; height: 10px; background: repeating-linear-gradient(90deg, #55585c 0 2px, transparent 2px 4px); }
.vthumb .grip { background: repeating-linear-gradient(#55585c 0 2px, transparent 2px 4px); }
.arrow { border: 5px solid transparent; }
.arrow-up { border-bottom-color: #333; border-top: 0; margin-top: 3px; }
.arrow-down { border-top-color: #333; border-bottom: 0; margin: auto 0 3px; }
.arrow-left { border-right-color: #333; border-left: 0; }
.arrow-right { border-left-color: #333; border-right: 0; }

/* Status bar */
.status {
  flex: none;
  height: 36px;
  display: flex;
  color: #1b1b1b;
  background: #dfd9d9;
  border-top: 2px solid #ececec;
  border-bottom: 1px solid #f2f2f2;
}
.cell { width: 250px; padding-left: 7px; display: flex; align-items: center; gap: 8px; border-right: 1px solid #c3bfbf; }
.cell svg { fill: none; }
.cell-wide { flex: 1; }
.zoom { width: 279px; padding: 0 5px 0 25px; display: flex; align-items: center; background: #dfdfe0; }
.zoom-label { width: 54px; }
.round { flex: none; }
.slider { flex: 1; min-width: 0; height: 24px; margin: 0 15px 0 13px; appearance: none; background: linear-gradient(#a3a6aa, #a3a6aa) center / 100% 2px no-repeat; }
.slider::-webkit-slider-thumb {
  appearance: none;
  width: 13px;
  height: 22px;
  border: 1px solid #74787d;
  border-radius: 2px 2px 6px 6px;
  background: #e6e6e6;
}

/* Taskbar */
.taskbar {
  flex: none;
  height: 57px;
  display: flex;
  border-top: 2px solid #4b5f7b;
  background: linear-gradient(90deg, #7686a0 82px, #98b3cc 84px, #98b3cc 76%, #7a89a3 80%);
}
.start { width: 84px; padding-right: 8px; display: grid; place-items: center; }
.apps { display: flex; gap: 4px; }
.app {
  width: 83px;
  height: 55px;
  display: grid;
  place-items: center;
  border: 1px solid #34486a;
  border-radius: 4px;
  box-shadow: inset 0 0 0 1px #d2deec;
  background: linear-gradient(165deg, #bccbe0, #a9bcd4 50%, #9cb2cc 55%, #aabfd8);
}
.app-active { background: linear-gradient(165deg, #dbe3ee, #c6d0de 55%, #d2dce8); }
.ide { font: bold 12px "Roboto", sans-serif; fill: #ee8c22; text-anchor: middle; }
.tray { margin-left: auto; display: flex; align-items: center; gap: 11px; }
.tray svg:first-child { margin: 0 8px 6px 0; }
.tray svg:nth-child(2) { margin-right: 6px; }
.clock { width: 130px; display: flex; flex-direction: column; padding-right: 4px; text-align: center; color: #e8edf3; }
.show-desktop { width: 21px; border: 1px solid #3f4d63; box-shadow: inset 0 0 0 1px #a6b2c3; background: linear-gradient(155deg, #a8b5c6, #56657b 50%, #7a8aa2); }
```
